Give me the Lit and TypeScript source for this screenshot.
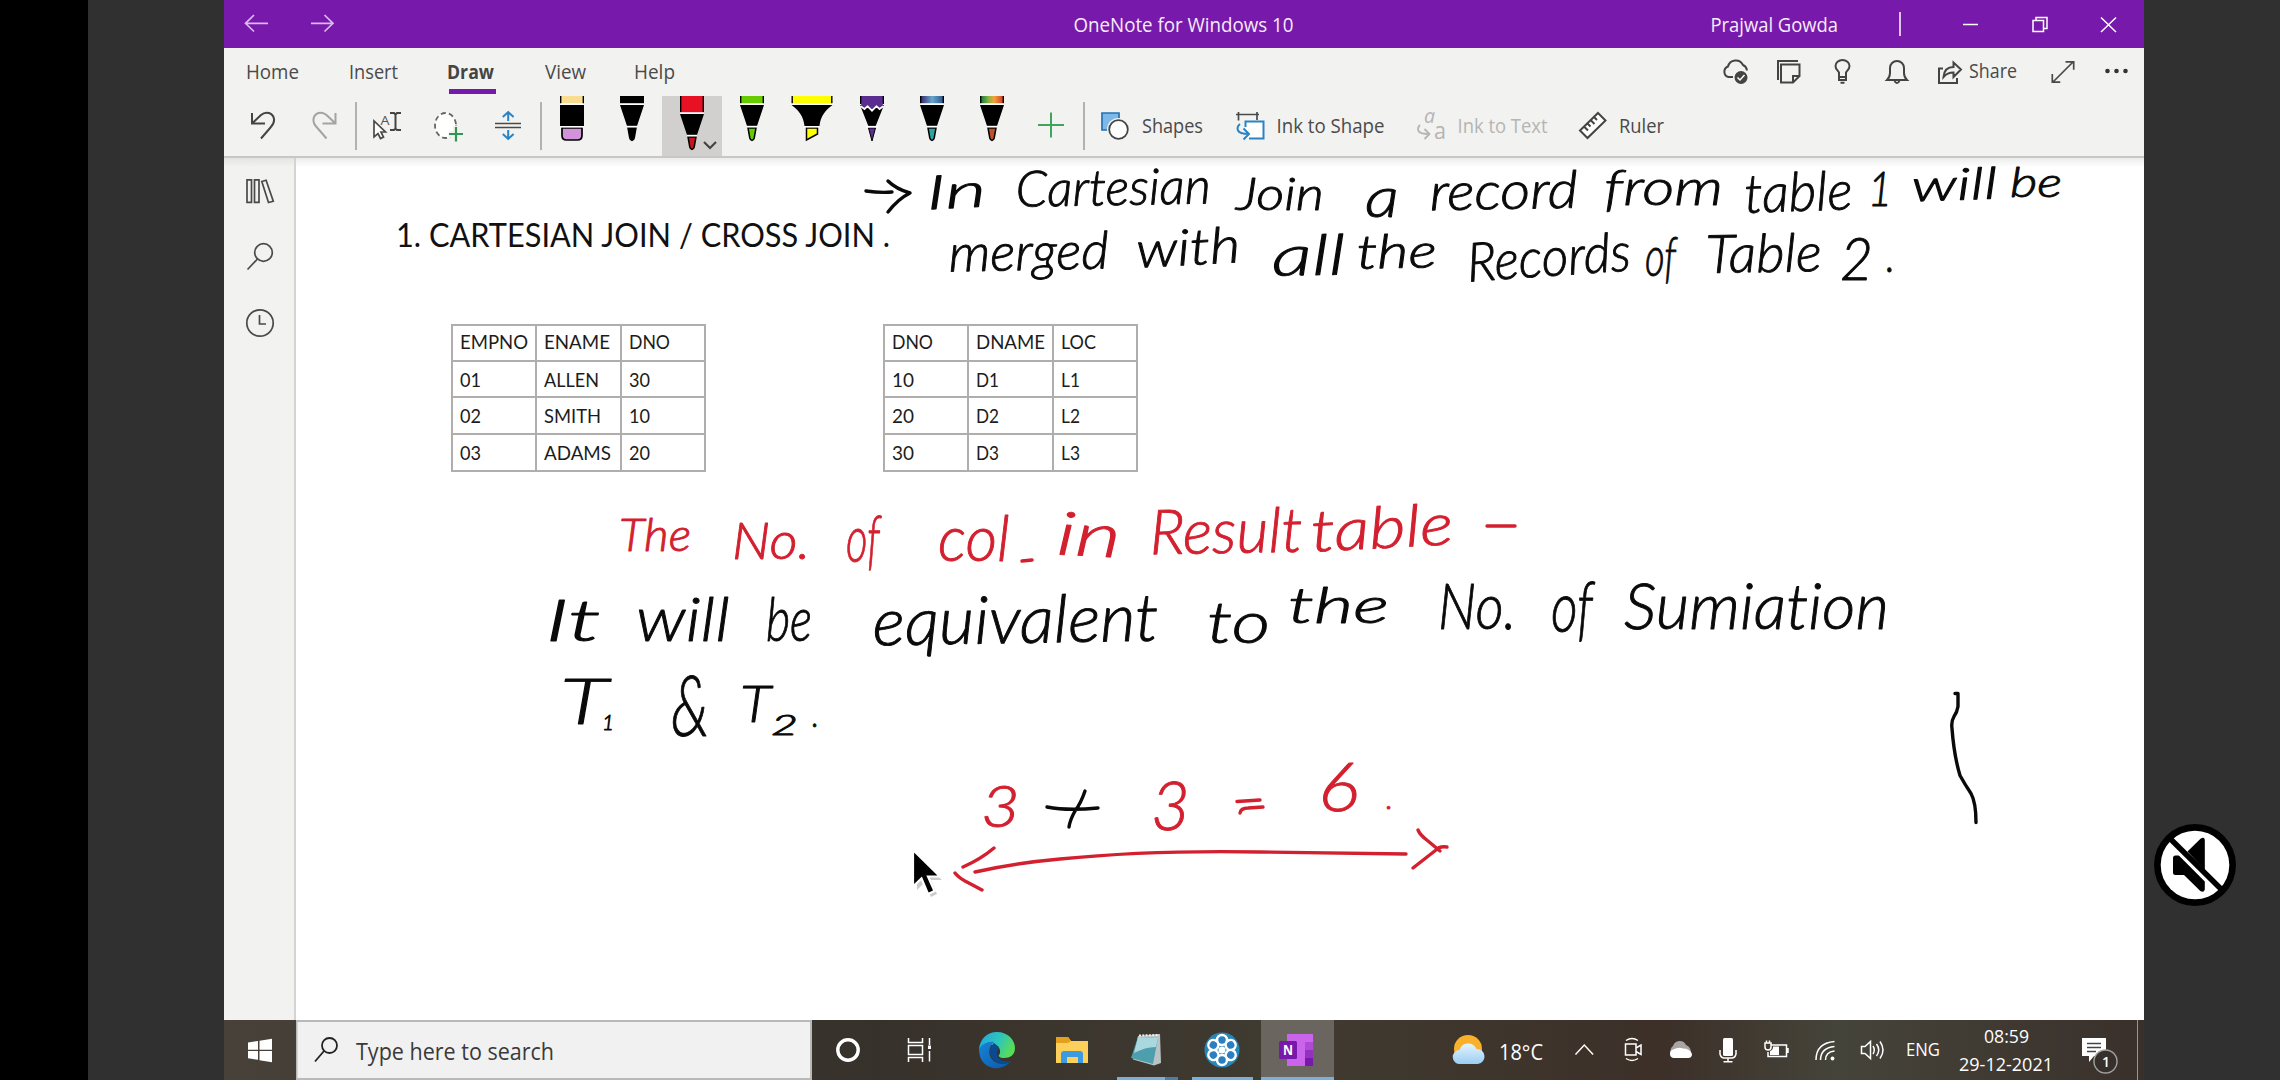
import { LitElement, html, svg, css, SVGTemplateResult } from "lit";
import { customElement } from "lit/decorators.js";

type Part = SVGTemplateResult | SVGTemplateResult[];

/** One slot of a bar. The drawing shares the window's coordinate space. */
const slot = (x: number, y: number, w: number, h: number, body: Part, cls = "") => html`
  <svg class="slot ${cls}" width=${w} height=${h} viewBox="${x} ${y} ${w} ${h}">${body}</svg>`;

/** Text fitted to a given width. */
const fit = (t: string, x: number, y: number, w: number, cls: string) => svg`
  <text class=${cls} x=${x} y=${y} textLength=${w} lengthAdjust="spacingAndGlyphs">${t}</text>`;

const bar = (x: number, y: number, w: number, body: Part, cls = "") => slot(x, y, w, y === 96 || y === 1020 ? 60 : 48, body, cls);

/* pens ------------------------------------------------------------- */
const pen = (x: number, cap: Part, tip: string, drop = 0) => svg`
  ${cap}
  <path d="M${x - 12} ${105 + drop}h24l-7 21h-10z" fill="#000"/>
  <path d="M${x - 12} ${104 + drop}h24" stroke="#fff" stroke-width="1.6"/>
  <path d="M${x - 4} ${128 + drop}h8l-1.800 10q-.6 2.400-2.200 2.400t-2.200-2.400z" fill=${tip} stroke="#000" stroke-width="1.500"/>
  <path d="M${x - 5} ${126.600 + drop}h10" stroke="#fff" stroke-width="1.600"/>`;
const cap = (x: number, fill: string, w = 12, drop = 0) => svg`
  <rect x=${x - w} y="96" width=${w * 2} height=${8 + drop} fill="#000"/>
  <rect x=${x - w + 1.4} y="96" width=${w * 2 - 2.8} height=${8 + drop} fill=${fill}/>`;

/* handwriting: text, x, width, baseline, size, slope ----------------- */
type Word = [string, number, number, number, number, number?];
const BLACK: Word[] = [
  ["In", 927, 60, 208, 47, -3], ["Cartesian", 1016, 195, 205, 50, -1], ["Join", 1236, 88, 210, 46],
  ["a", 1365, 34, 217, 56], ["record", 1430, 148, 209, 52, -1], ["from", 1604, 119, 205, 50],
  ["table", 1745, 108, 211, 54, -2], ["1", 1868, 24, 206, 48], ["will", 1912, 86, 200, 44, -2],
  ["be", 2010, 52, 197, 42],
  ["merged", 949, 160, 270, 52, -1], ["with", 1137, 104, 265, 50, -3], ["all", 1272, 74, 275, 56, -1],
  ["the", 1357, 80, 268, 47, -1], ["Records", 1468, 164, 276, 54, -4], ["of", 1645, 31, 276, 56],
  ["Table", 1706, 116, 272, 53, -1], ["2", 1840, 33, 280, 60], [".", 1886, 9, 272, 46],
  ["It", 545, 56, 641, 57], ["will", 636, 94, 641, 61], ["be", 766, 46, 641, 61],
  ["equivalent", 873, 286, 643, 66, -1], ["to", 1207, 63, 643, 58], ["the", 1288, 101, 623, 49],
  ["No.", 1438, 78, 629, 64], ["of", 1551, 42, 632, 72], ["Sumiation", 1624, 265, 629, 64],
  ["T", 560, 48, 724, 63], ["1", 602, 12, 730, 22], ["&", 671, 38, 736, 84],
  ["T", 740, 31, 722, 52], ["2", 771, 27, 735, 28], [".", 812, 7, 727, 36],
];
const RED: Word[] = [
  ["The", 619, 72, 551, 45], ["No.", 732, 78, 559, 51], ["of", 846, 34, 562, 66],
  ["col", 938, 72, 561, 64], ["in", 1056, 64, 556, 60, 3], ["Result", 1150, 153, 553, 62, -1],
  ["table", 1312, 142, 548, 58, -3],
  ["3", 981, 39, 827, 58], ["3", 1151, 39, 830, 68], ["6", 1318, 41, 811, 68], [".", 1386, 7, 809, 30],
];
const words = (list: Word[], cls: string) => list.map(([t, x, w, y, s, r]) => svg`
  <text class="ink ${cls}" x=${x} y=${y} font-size=${s} textLength=${w} lengthAdjust="spacingAndGlyphs"
    transform="rotate(${r ?? 0} ${x + w / 2} ${y})">${t}</text>`);

const EMP = [["EMPNO", 68], ["ENAME", 66], ["DNO", 41], ["01", 21], ["ALLEN", 55], ["30", 21], ["02", 21],
  ["SMITH", 57], ["10", 21], ["03", 21], ["ADAMS", 67], ["20", 21]] as [string, number][];
const DEPT = [["DNO", 41], ["DNAME", 69], ["LOC", 35], ["10", 22], ["D1", 23], ["L1", 19], ["20", 22],
  ["D2", 23], ["L2", 19], ["30", 22], ["D3", 23], ["L3", 19]] as [string, number][];

@customElement("app-root")
export class AppRoot extends LitElement {
  static styles = css`
    :host { display: block; width: 2280px; height: 1080px; background: #303030; }
    * { box-sizing: border-box; }
    .screen { display: grid; grid-template-columns: 88px 136px 1920px 136px; height: 1080px; }
    .edge { background: #000; }
    .window { grid-column: 3; display: grid; grid-template-rows: 48px 48px 60px 864px 60px; background: #fff; overflow: hidden; }
    .row { display: grid; justify-items: start; }
    .slot { display: block; overflow: visible; fill: none; }
    .title { background: #7719aa; padding-left: 21px; grid-template-columns: 66px 763px 637px 188px 64px 69px 69px 1fr; }
    .tabs { background: #f2f2f0; padding-left: 23px; grid-template-columns: 103px 98px 97px 90px 1087px 55px 57px 52px 52px 31px 82px 54px 1fr; }
    .tools { background: #f2f2f0; padding-left: 27px;
      grid-template-columns: 61px 43px 18px 61px 61px 45px 2px repeat(8, 60px) 61px 18px 41px 94px 42px 139px 42px 120px 41px 1fr; }
    .selected { background: #d2d0ce; }
    .body { display: grid; grid-template-columns: 72px 1fr; border-top: 2px solid #c9c7c5; position: relative; }
    .rail { background: linear-gradient(#e4e4e2, #f2f2f0 9px); border-right: 2px solid #d4d4d4; padding: 11px 0 0 20px; display: grid; grid-template-rows: 65px 69px 44px; align-content: start; }
    .page { background: linear-gradient(#ececec, #fff 9px); padding: 54px 0 0 102px; }
    .heading { height: 112px; }
    .tables { display: flex; gap: 177px; padding-left: 53px; }
    .table { display: grid; grid-template-columns: 84px 85px 84px; grid-template-rows: 36px 36px 37px 37px; border: 0 solid #b0aeac; border-width: 2px 0 0 2px; width: 255px; }
    .cell { border: solid #b0aeac; border-width: 0 2px 2px 0; padding-left: 7px; }
    .overlay { position: absolute; left: 0; top: -2px; fill: none; pointer-events: none; overflow: visible; }
    .taskbar { background: linear-gradient(90deg, #47413a 0, #37312b 34%, #403b31 55%, #3c3029 75%, #45443a 84%, #3a302b 100%);
      grid-template-columns: 72px 515px 96px 72px 77px 61px 74px 70px 192px 122px 49px 44px 51px 45px 51px 46px 46px 53px 122px 55px 1fr; }
    .sound { position: absolute; left: 2154px; top: 824px; }
    text { font-family: "Open Sans", "Noto Sans", sans-serif; }
    .light { fill: #f6ecfb; font-size: 20px; }
    .tab { fill: #4a4a4a; font-size: 20px; }
    .bold { font-weight: 700; fill: #444; }
    .dim { fill: #b5b5b3; font-size: 20px; }
    .search { fill: #3a3a3a; font-size: 23px; }
    .tray { fill: #fff; font-size: 19px; }
    .temp { fill: #fff; font-size: 21.500px; }
    .h { font-family: Lato, sans-serif; font-size: 33px; fill: #111; }
    .td { font-family: Lato, sans-serif; font-size: 20px; fill: #1c1c1c; }
    .ink { font-family: Lato, sans-serif; font-style: italic; font-weight: 300; stroke-width: .9; stroke-linejoin: round; font-variant-ligatures: none; }
    .black { fill: #0a0a0a; stroke: #0a0a0a; }
    .red { fill: #d3202f; stroke: #d3202f; }
    .small { font-family: "Open Sans", sans-serif; font-size: 15px; font-weight: 600; fill: #fff; }
    .logo { font-size: 14px; font-weight: 700; fill: #fff; }
    .cursor-letter { font-size: 13px; fill: #555; }
    .big { font-size: 24px; }
    .s { stroke: #444; stroke-width: 2; }
    .t { stroke: #4a4a4a; stroke-width: 1.700; }
    .w { stroke: #fff; stroke-width: 1.500; }
    .b { stroke: #2a84c4; stroke-width: 2; }
  `;

  private titleBar() {
    return html`<header class="row title">
      ${bar(245, 0, 23, svg`<path d="M268 23.300H246M254 15l-8.500 8.300 8.500 8.200" stroke="#dcb8ee" stroke-width="1.700"/>`)}
      ${bar(311, 0, 23, svg`<path d="M311 23.300h21M324.500 15l8.500 8.300-8.500 8.200" stroke="#dcb8ee" stroke-width="1.700"/>`)}
      ${bar(1074, 0, 220, fit("OneNote for Windows 10", 1073.500, 32, 220, "light"))}
      ${bar(1711, 0, 127, fit("Prajwal Gowda", 1710.500, 32, 127.500, "light"))}
      ${bar(1899, 0, 3, svg`<path class="w" d="M1900 12v24"/>`)}
      ${bar(1963, 0, 16, svg`<path class="w" d="M1963 24.500h15"/>`)}
      ${bar(2032, 0, 17, svg`<path class="w" d="M2033 20.500h10.500v11H2033zM2036 20v-2.500h11V28.500h-3"/>`)}
      ${bar(2101, 0, 17, svg`<path class="w" d="M2101 17.500l15 14.500M2116 17.500l-15 14.500"/>`)}
    </header>`;
  }

  private tabs() {
    const y = 48;
    return html`<nav class="row tabs">
      ${bar(247, y, 52, fit("Home", 246, 79, 53, "tab"))}
      ${bar(350, y, 48, fit("Insert", 349, 79, 49, "tab"))}
      ${bar(448, y, 48, svg`${fit("Draw", 447, 79, 47, "tab bold")}<rect x="449" y="89" width="47" height="5" fill="#7719aa"/>`)}
      ${bar(545, y, 42, fit("View", 545, 79, 41, "tab"))}
      ${bar(635, y, 40, fit("Help", 634, 79, 41, "tab"))}
      ${bar(1722, y, 27, svg`<path class="s" d="M1733 77h-4.500a5.500 5.500 0 0 1-.5-10.500 8 8 0 0 1 15-1.500q3.500 1.500 4 5.500"/><circle cx="1741" cy="77.500" r="6.500" fill="#444"/><path d="M1737.500 77.500l2.500 2.500 4.500-5" stroke="#fff" stroke-width="1.500"/>`)}
      ${bar(1777, y, 24, svg`<path class="s" d="M1778 80V61h20M1781 64.500h18.500V76l-6.500 6.500h-12zM1799.500 76h-6.500v6.500"/>`)}
      ${bar(1834, y, 18, svg`<path class="s" d="M1839 77v-4.500c-1-2-3.500-3-3.500-6.500a7 6 0 0 1 14 0c0 3.500-2.500 4.500-3.500 6.500V77zM1839 77v3h7v-3M1840.500 82.800h4"/>`)}
      ${bar(1886, y, 22, svg`<path class="s" d="M1887 80h20q-3-3-3-7v-5a7 7 0 0 0-14 0v5q0 4-3 7zM1894.500 81q2.500 4 5 0"/>`)}
      ${bar(1938, y, 25, svg`<path class="s" d="M1943 68.500h-4V83h18v-5M1943.500 77c.5-6 4-10 10-10v-4.500l7.500 7-7.500 7.500v-4.500c-4.500 0-7.500 1.500-10 4.500z"/>`)}
      ${bar(1969, y, 48, fit("Share", 1969, 78, 48, "tab"))}
      ${bar(2051, y, 24, svg`<path class="t" d="M2053 82l20-20M2065.500 61.800h8.200v8M2052.300 74v8.200h8"/>`)}
      ${bar(2105, y, 24, svg`<g fill="#333"><circle cx="2107.500" cy="71" r="2.300"/><circle cx="2116.500" cy="71" r="2.300"/><circle cx="2125.500" cy="71" r="2.300"/></g>`)}
    </nav>`;
  }

  private tools() {
    const y = 96;
    const divider = (x: number) => bar(x, y, 2, svg`<rect x=${x} y="102" width="2" height="48" fill="#b4b2b0"/>`);
    return html`<div class="row tools">
      ${bar(251, y, 25, svg`<path class="s" d="M252 113v10.500h13M252 123.500l9-8.500c5-4.500 12-2 13 4 .5 4-1 6-3.500 8.500L261 138.500"/>`)}
      ${bar(312, y, 25, svg`<path d="M327.500 0" stroke="none"/><path d="M335.500 113v10.500h-13M335.500 123.500l-9-8.500c-5-4.500-12-2-13 4-.5 4 1 6 3.500 8.500l9.500 11" stroke="#a3a3a1" stroke-width="2"/>`)}
      ${divider(355)}
      ${bar(373, y, 29, svg`<path class="t" fill="#fff" d="M374 121v16l4-3.500 2.500 5 3-1.500-2.500-5h4.500z"/>${fit("A", 380.500, 125, 9, "cursor-letter")}<path class="s" d="M390 113h4l1.500 1.500 1.500-1.500h4M390 130h4l1.500-1.500 1.500 1.500h4M395.500 114v15"/>`)}
      ${bar(434, y, 30, svg`<ellipse cx="445.500" cy="125.500" rx="10.500" ry="12.500" fill="#fff" stroke="#666" stroke-width="1.800" stroke-dasharray="5 3.200"/><path d="M456 126v16M448.500 134h15.500" stroke="#f2f2f0" stroke-width="6"/><path d="M456 127v14.500M449 134h14" stroke="#2e9650" stroke-width="2.200"/>`)}
      ${bar(495, y, 27, svg`<path class="t" d="M495 123.500h26M495 127.500h26"/><path class="b" d="M508.200 121v-8.500M502.800 117l5.400-5 5.400 5M508.200 130v8.500M502.800 134l5.400 5 5.400-5"/>`)}
      ${divider(540)}
      ${bar(542, y, 60, svg`${cap(572, "#f8dc90")}<path d="M560 105h24v21h-24z" fill="#000"/><path d="M562 128h20v7.500q0 4.500-4.500 4.500h-11q-4.500 0-4.500-4.500z" fill="#d193d9" stroke="#000" stroke-width="1.700"/><path d="M560 104h24M560 126.700h24" stroke="#fff" stroke-width="1.600"/>`)}
      ${bar(602, y, 60, pen(632, cap(632, "#000"), "#000"))}
      ${bar(662, y, 60, svg`${pen(692, cap(692, "#e81123", 12, 9), "#c4161f", 9)}<path d="M704 142l6 6 6-6" stroke="#444" stroke-width="2.200"/>`, "selected")}
      ${bar(722, y, 60, pen(752, cap(752, "#66cc00"), "#66cc00"))}
      ${bar(782, y, 60, svg`${cap(812, "#ff0", 20.500)}<path d="M791.500 105h41c-7 5-12 11-13 21h-15c-1-10-6-16-13-21z" fill="#000"/><path d="M806.500 128h11v6l-11 6z" fill="#ff0" stroke="#000" stroke-width="1.500"/><path d="M791 104h42M804 126.700h16" stroke="#fff" stroke-width="1.600"/>`)}
      ${bar(842, y, 60, svg`${cap(872, "#5c2d91")}<path d="M860 105l24 0-8.500 21.500h-7z" fill="#000"/><path d="M861 103v1.500l3.500 3.500 3-3 4.500 4.500 4.500-4.500 3 3 3.500-3.500V103z" fill="#5c2d91"/><path d="M860.500 106l4 3 3-2.800 4.500 4.500 4.500-4.500 3 2.800 4-3" stroke="#fff" stroke-width="1.800"/><path d="M868.500 128h7L872 141z" fill="#5c2d91" stroke="#000"/><path d="M866 126.700h12" stroke="#fff" stroke-width="1.600"/>`)}
      ${bar(902, y, 60, svg`<defs><linearGradient id="gx"><stop stop-color="#3a2f75"/><stop offset=".5" stop-color="#6aa6cc"/><stop offset="1" stop-color="#2c5c90"/></linearGradient></defs>${pen(932, cap(932, "url(#gx)"), "#2fa3a3")}`)}
      ${bar(962, y, 60, svg`<defs><linearGradient id="rb"><stop stop-color="#17803c"/><stop offset=".35" stop-color="#8fb544"/><stop offset=".6" stop-color="#f2a33a"/><stop offset="1" stop-color="#d8402a"/></linearGradient></defs>${pen(992, cap(992, "url(#rb)"), "#c0502c")}`)}
      ${bar(1022, y, 60, svg`<path d="M1051 112.500v25M1038 125h26" stroke="#3fa45c" stroke-width="2"/>`)}
      ${divider(1083)}
      ${bar(1101, y, 29, svg`<path d="M1102 113h17v17h-17z" fill="#7db8ea" stroke="#2672b0" stroke-width="1.700"/><circle cx="1118.500" cy="129.500" r="11.500" fill="#f2f2f0"/><circle cx="1118.500" cy="129.500" r="9.300" fill="#fff" stroke="#444" stroke-width="1.800"/>`)}
      ${bar(1142, y, 62, fit("Shapes", 1142, 133, 61, "tab"))}
      ${bar(1236, y, 28, svg`<path class="t" d="M1236 114.500h23M1238.500 112v8.500M1257 112v8"/><path d="M1245.500 121.500h18v17h-18z" fill="#fff"/><path class="b" d="M1245.500 127v-5.500h18v17H1249M1240 124q-3.500 3-2 6.500 1.500 3.500 11 3.500M1243.500 128.500l5.500 5.500-5.500 5.500" stroke-width="1.800"/>`)}
      ${bar(1278, y, 107, fit("Ink to Shape", 1276.500, 133, 108, "tab"))}
      ${bar(1417, y, 29, svg`<text class="dim" x="1424" y="123" textLength="11" lengthAdjust="spacingAndGlyphs" font-style="italic">a</text>${fit("a", 1434, 139, 12, "dim big")}<path d="M1420 125q-3 3-1.500 6 1.500 3 10 3M1424.500 129l5 5-5 5" stroke="#b5b5b3" stroke-width="1.800"/>`)}
      ${bar(1459, y, 89, fit("Ink to Text", 1457.500, 133, 90, "dim"))}
      ${bar(1579, y, 28, svg`<path class="s" fill="#fff" d="M1598 113l7.500 7.500-18 17.500-7.500-7.500zM1594 117l3 3M1590.500 120l4 4M1587.500 123.500l3 3M1584 126.500l4 4" stroke-width="1.700"/>`)}
      ${bar(1620, y, 45, fit("Ruler", 1619, 133, 45, "tab"))}
    </div>`;
  }

  private table(rows: [string, number][]) {
    return html`<div class="table">${rows.map(([t, w], i) => html`<div class="cell">
      ${slot(0, 0, w, 33, fit(t, 0, i < 3 ? 23 : 24.5, w, "td"))}</div>`)}</div>`;
  }

  private notebook() {
    return html`<main class="body">
      <aside class="rail">
        ${slot(244, 169, 32, 44, svg`<path class="t" d="M247 179.800h4.500v22.500H247zM254.500 179.800h4.500v22.500h-4.500zM261.800 181.500l4.300-1.300 7.200 21-4.800 1.300z"/>`)}
        ${slot(244, 234, 32, 44, svg`<circle class="t" cx="263.500" cy="252.500" r="8.800"/><path class="t" d="M257.500 259L247.500 269.500"/>`)}
        ${slot(244, 303, 32, 44, svg`<circle class="t" cx="260" cy="323" r="13.200"/><path class="t" d="M259.500 315v9h6.500"/>`)}
      </aside>
      <section class="page">
        <div class="heading">${slot(398, 212, 490, 44, fit("1. CARTESIAN JOIN / CROSS JOIN .", 396, 246.500, 494, "h"))}</div>
        <div class="tables">${this.table(EMP)}${this.table(DEPT)}</div>
      </section>
      <svg class="overlay" width="1920" height="862" viewBox="224 156 1920 862">
        ${words(BLACK, "black")}${words(RED, "red")}
        <g stroke="#0a0a0a" stroke-width="3.400" stroke-linecap="round" stroke-linejoin="round">
          <path d="M866 191q14 2 26 1M888 181q8 8 22 12-12 6-22 19"/>
          <path d="M1047 807q20 4 51 1M1085 791q-4 12-10 20-5 9-6 16"/>
          <path d="M1955 693.500h3v13q-1 6-4 10-3 5-2 12 2 27 8 47 5 9 11 18 5 9 5 29"/>
        </g>
        <g stroke="#d3202f" stroke-width="3.400" stroke-linecap="round" stroke-linejoin="round">
          <path d="M1022 561l10-1M1487 526h28"/>
          <path d="M1237 801.500l23-1.500M1240 813q1-5 8-5l15-1"/>
          <path d="M975 872q40-9 85-13 90-9 200-7l146 2M963 867q18-8 31-19M955 873q3 4 10 8l17 9"/>
          <path d="M1418 830q2 5 10 11l12 10M1413 868q14-11 23-18 3-4 11-3"/>
        </g>
        <g class="cursor">
          <path d="M917 857v33l7-7 7 14 6-3-6-14h11z" fill="#0003"/>
          <path d="M913 850v36.500l8.500-8 6.500 15.500 6.500-3-6.500-14.500h12z" fill="#000" stroke="#fff" stroke-width="2.200"/>
        </g>
      </svg>
    </main>`;
  }

  private taskbar() {
    const y = 1020;
    const petals = [0, 60, 120, 180, 240, 300];
    return html`<footer class="row taskbar">
      ${bar(224, y, 72, svg`<path d="M248 1042.500l10-1.500v8.800h-10zM259.500 1040.700l12.500-2v11.100h-12.500zM248 1051h10v8.800l-10-1.500zM259.500 1051H272v11.200l-12.500-2z" fill="#fff"/>`)}
      ${bar(296, y, 515, svg`<rect x="296" y="1020" width="516" height="60" fill="#b9b9b9"/><rect x="297.500" y="1022" width="512.500" height="56" fill="#f1f1f1"/><circle cx="329.500" cy="1045.500" r="7.500" stroke="#222" stroke-width="1.800"/><path d="M324 1051l-9 10.500" stroke="#222" stroke-width="1.800"/>${fit("Type here to search", 356, 1060, 198, "search")}`)}
      ${bar(811, y, 72, svg`<circle cx="848" cy="1050" r="10.200" stroke="#fff" stroke-width="3.400"/>`)}
      ${bar(907, y, 26, svg`<path class="w" d="M908.500 1038v4.500h14v-4.500M908.500 1062v-4.500h14v4.500M908.500 1045.500h14v9h-14zM929.500 1038v7M929.500 1051v10.500"/><path d="M928 1045.500h3v3.500h-3z" fill="#fff"/>`)}
      ${bar(979, y, 37, svg`<defs><linearGradient id="eg" x1="0" y1="0" x2="1" y2=".4"><stop stop-color="#1fa2e8"/><stop offset=".6" stop-color="#2fc6b8"/><stop offset="1" stop-color="#58dc5a"/></linearGradient><linearGradient id="eb" x1="0" y1="0" x2="1" y2="1"><stop stop-color="#1883d8"/><stop offset="1" stop-color="#0c59a4"/></linearGradient></defs>
        <path d="M979 1049c1-10 8-17 18-17 11 0 18 8 18 16 0 7-5 10-11 10-4 0-6-1.500-5-3 2-2 2-9-5-10-6-.5-12 1-15 4z" fill="url(#eg)"/><path d="M979 1049c3-5 9-8 15-7-5 4-6 11-3 16 4 6 13 8 20 3-5 6-12 8-18 7-9-2-14-9-14-19z" fill="url(#eb)"/><path d="M994 1043c-5 4-5 11-2 15 4 6 13 8 20 3-9 2-16-2-15-9 .3-3 2-4 2-5z" fill="#0b4a8f"/>`)}
      ${bar(1056, y, 33, svg`<path d="M1056 1037h12l3 4h17v22h-32z" fill="#fdd05c"/><path d="M1056 1037h12l3 4-3 2h-12z" fill="#e2a11d"/><path d="M1061 1063v-9q0-3 3-3h16q3 0 3 3v9h-5v-6h-11v6z" fill="#3c9ae0"/>`)}
      ${bar(1117, y, 61, svg`<path d="M1138 1036l22-2 1 29-7 2.500-21-6z" fill="#b9c3c5"/><path d="M1138 1037l20 1-5 26-22-6z" fill="#4d9fae"/><path d="M1138 1037l20 1-2 9c-8 0-14 2-22 6z" fill="#a9d8df"/><path d="M1139 1035.500l20-.5" stroke="#eee" stroke-width="2" stroke-dasharray="2 1.300"/><path d="M1117 1077h48v3h-48z" fill="#7aaedb"/><path d="M1165 1077h13v3h-13z" fill="#4f7ca0"/>`)}
      ${bar(1191, y, 62, svg`<circle cx="1222" cy="1050" r="17.500" fill="#2788b8"/>${petals.map(a => svg`<circle cx="1222" cy="1040" r="5" fill="#2b7fc0" stroke="#fff" stroke-width="2.500" transform="rotate(${a} 1222 1050)"/>`)}<circle cx="1222" cy="1050" r="3.500" fill="#fff"/><path d="M1192 1077h61v3h-61z" fill="#7aaedb"/>`)}
      ${bar(1261, y, 73, svg`<path d="M1261 1020h73v60h-73z" fill="#6a655e"/><path d="M1287 1034h26v32h-26z" fill="#ca64ea"/><path d="M1305 1042h8v8h-8z" fill="#ae4bd5"/><path d="M1305 1050h8v8h-8z" fill="#9332bf"/><path d="M1305 1058h8v8h-8z" fill="#7719aa"/><rect x="1279" y="1041" width="18" height="18" rx="1.500" fill="#7719aa"/><text class="logo" x="1283" y="1055" textLength="10" lengthAdjust="spacingAndGlyphs">N</text><path d="M1261 1077h73v3h-73z" fill="#7aaedb"/>`)}
      ${bar(1453, y, 90, svg`<defs><linearGradient id="cl" x2="0" y2="1"><stop stop-color="#e6f4fd"/><stop offset="1" stop-color="#9bcdf2"/></linearGradient></defs><circle cx="1468" cy="1049" r="14" fill="#f9b02b"/><path d="M1460 1064a7 7 0 0 1-.5-14 9 9 0 0 1 17-1 7.500 7.500 0 0 1 1 15z" fill="url(#cl)"/>${fit("18°C", 1499, 1060, 44, "temp")}`)}
      ${bar(1575, y, 19, svg`<path class="w" d="M1575.500 1054.500l8.800-9.500 8.800 9.500" stroke-width="1.800"/>`)}
      ${bar(1624, y, 18, svg`<path class="w" d="M1625.500 1044h10.500v11h-10.500zM1636 1048l5-3v9.500l-5-3M1626 1040.500q6-4 12 0M1626 1058.500q6 4 12 0"/>`)}
      ${bar(1668, y, 25, svg`<path d="M1672 1055a6 6 0 0 1 1-9 7 7 0 0 1 13-1q5 2 5 8z" fill="#a8a5a2"/><path d="M1673 1058a4.500 4.500 0 0 1 0-8.500q6-3 10-1 7 0 9 5.500 0 4-4 4z" fill="#fff"/>`)}
      ${bar(1719, y, 17, svg`<rect x="1723" y="1038" width="10" height="18" rx="1.500" fill="#fff"/><path class="w" d="M1720 1050v4q1 4 4 4h8q3 0 4-4v-4M1728 1058v4M1723.500 1061.800h9"/>`)}
      ${bar(1764, y, 25, svg`<path class="w" d="M1771 1045h15.500v11.500H1768V1052M1788 1048v5M1765 1043v4q0 3 3 3t3-3v-4zM1766.500 1040.500v2.500M1769.500 1040.500v2.500"/><path d="M1773 1046.500h6v8.500h-9v-4q3-1 3-4z" fill="#fff"/>`)}
      ${bar(1815, y, 21, svg`<path class="w" d="M1816 1060q0-17 18.500-18.500M1820.500 1060q0-12 14-13.500M1825.500 1060q0-8 9-9"/><circle cx="1832.500" cy="1058.500" r="1.900" fill="#fff"/>`)}
      ${bar(1861, y, 23, svg`<path class="w" d="M1861.500 1046.500h3.500l5.500-5v17l-5.500-5h-3.500zM1873 1046q2.500 4 0 8M1876.500 1044q4.500 6 0 12M1880 1041.500q6 8.500 0 17"/>`)}
      ${bar(1907, y, 34, fit("ENG", 1906, 1056, 34, "tray"))}
      ${bar(1960, y, 93, svg`${fit("08:59", 1984, 1043, 45, "tray")}${fit("29-12-2021", 1959, 1071, 94, "tray")}`)}
      ${bar(2082, y, 38, svg`<path d="M2082 1038h24v18h-12l-5 6v-6h-7z" fill="#fff"/><path d="M2087 1043.500h14M2087 1047.500h14M2087 1051.500h9" stroke="#444" stroke-width="1.400"/><circle cx="2105.500" cy="1061.500" r="11.500" fill="#35302b" stroke="#a5a29f" stroke-width="1.400"/>${fit("1", 2102, 1067, 8, "small")}`)}
      ${bar(2137, y, 2, svg`<path d="M2137.500 1020v60" stroke="#99958f"/>`)}
    </footer>`;
  }

  render() {
    return html`<div class="screen">
      <div class="edge"></div>
      <div class="window">
        ${this.titleBar()}${this.tabs()}${this.tools()}${this.notebook()}${this.taskbar()}
      </div>
      <svg class="sound" width="82" height="82" viewBox="2154 824 82 82">
        <circle cx="2195" cy="865" r="41" fill="#000"/>
        <circle cx="2195" cy="865" r="34.300" fill="#fff"/>
        <path d="M2187.500 851.500l13-12.800q4.300-2.500 4.300 2V870z" fill="#000"/>
        <path d="M2173 858q0-2.500 2.500-2.500h3.500l25.800 26v8q-1 3.500-4.500 1.500L2184 875h-8.500q-2.500 0-2.500-2.500z" fill="#000"/>
        <path d="M2173.500 847.500l43 42.500" stroke="#fff" stroke-width="3.600"/>
        <path d="M2171 839.500l50.500 50" stroke="#000" stroke-width="5.500"/>
      </svg>
    </div>`;
  }
}
